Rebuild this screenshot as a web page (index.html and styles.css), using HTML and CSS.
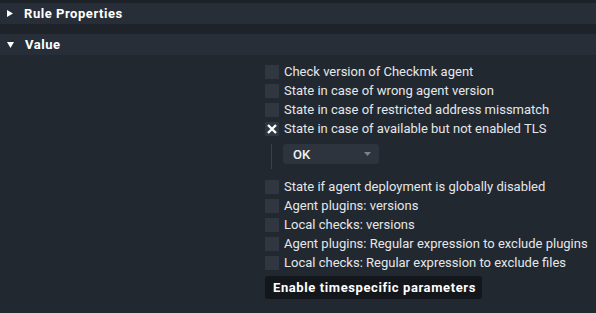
FILE: index.html
```html
<!DOCTYPE html>
<html lang="en">

<head>
    <meta charset="UTF-8">
    <meta name="viewport" content="width=device-width, initial-scale=1.0">
    <title>Rule Properties</title>
    <link rel="stylesheet" href="styles.css">
</head>

<body>
    <div class="top-strip"></div>
    <div class="section-head">
        <svg class="fold" width="6" height="7" viewBox="0 0 6 7"><polygon points="0,0 6,3.5 0,7" fill="#ffffff" /></svg>
        <span>Rule Properties</span>
    </div>
    <div class="section-gap"></div>
    <div class="section-head">
        <svg class="fold" width="7" height="6" viewBox="0 0 7 6"><polygon points="0,0 7,0 3.5,6" fill="#ffffff" /></svg>
        <span>Value</span>
    </div>
    <main class="value-body">
        <div class="option">
            <span class="checkbox"></span>
            <label>Check version of Checkmk agent</label>
        </div>
        <div class="option">
            <span class="checkbox"></span>
            <label>State in case of wrong agent version</label>
        </div>
        <div class="option">
            <span class="checkbox"></span>
            <label>State in case of restricted address missmatch</label>
        </div>
        <div class="option">
            <span class="checkbox checked">
                <svg width="14" height="14" viewBox="0 0 14 14">
                    <path d="M3 3 L11 11 M11 3 L3 11" stroke="#ffffff" stroke-width="2.4" />
                </svg>
            </span>
            <label>State in case of available but not enabled TLS</label>
        </div>
        <div class="sub-value">
            <div class="dropdown">
                <span>OK</span>
                <svg width="7" height="4" viewBox="0 0 7 4"><polygon points="0,0 7,0 3.5,4" fill="#7b828b" /></svg>
            </div>
        </div>
        <div class="option">
            <span class="checkbox"></span>
            <label>State if agent deployment is globally disabled</label>
        </div>
        <div class="option">
            <span class="checkbox"></span>
            <label>Agent plugins: versions</label>
        </div>
        <div class="option">
            <span class="checkbox"></span>
            <label>Local checks: versions</label>
        </div>
        <div class="option">
            <span class="checkbox"></span>
            <label>Agent plugins: Regular expression to exclude plugins</label>
        </div>
        <div class="option">
            <span class="checkbox"></span>
            <label>Local checks: Regular expression to exclude files</label>
        </div>
        <button type="button" class="timespecific">Enable timespecific parameters</button>
    </main>
</body>

</html>
```

FILE: styles.css
```css
body {
    font-family: Roboto, "Liberation Sans", sans-serif;
    margin: 0;
    padding: 0;
    background-color: #222830;
    color: #e4e7ea;
    height: 313px;
    overflow: hidden;
}

.top-strip {
    height: 3px;
    background-color: #1d2228;
}

.section-head {
    display: flex;
    align-items: center;
    height: 21px;
    background-color: #272e38;
    padding-left: 7px;
    font-size: 13px;
    font-weight: bold;
    color: #ffffff;
    letter-spacing: 0.55px;
}

.section-head .fold {
    margin-right: 11px;
}

.section-gap {
    height: 10px;
    background-color: #1e232a;
}

.value-body {
    display: flex;
    flex-direction: column;
    align-items: flex-start;
    padding: 10px 0 0 265px;
}

.option {
    display: flex;
    align-items: center;
    height: 14px;
    margin-bottom: 5px;
    font-size: 13px;
}

.checkbox {
    display: block;
    width: 14px;
    height: 14px;
    background-color: #303741;
    margin-right: 5px;
}

.checkbox svg {
    display: block;
}

.option label {
    line-height: 14px;
    white-space: nowrap;
}

.sub-value {
    margin: 3px 0 11px 6px;
    height: 25px;
    border-left: 1px solid #3a414a;
    padding-left: 11px;
}

.dropdown {
    display: flex;
    align-items: center;
    justify-content: space-between;
    box-sizing: border-box;
    width: 96px;
    height: 20px;
    padding: 0 8px 0 10px;
    background-color: #2d343e;
    border-radius: 3px;
    font-size: 13px;
    font-weight: 500;
    color: #f0f2f4;
}

.timespecific {
    margin-top: 1px;
    width: 217px;
    height: 23px;
    padding: 0 0 0 8px;
    text-align: left;
    background-color: #13171c;
    border: none;
    border-radius: 3px;
    color: #ffffff;
    font-family: Roboto, "Liberation Sans", sans-serif;
    font-size: 13px;
    font-weight: bold;
    letter-spacing: 0.6px;
    cursor: pointer;
}
```
